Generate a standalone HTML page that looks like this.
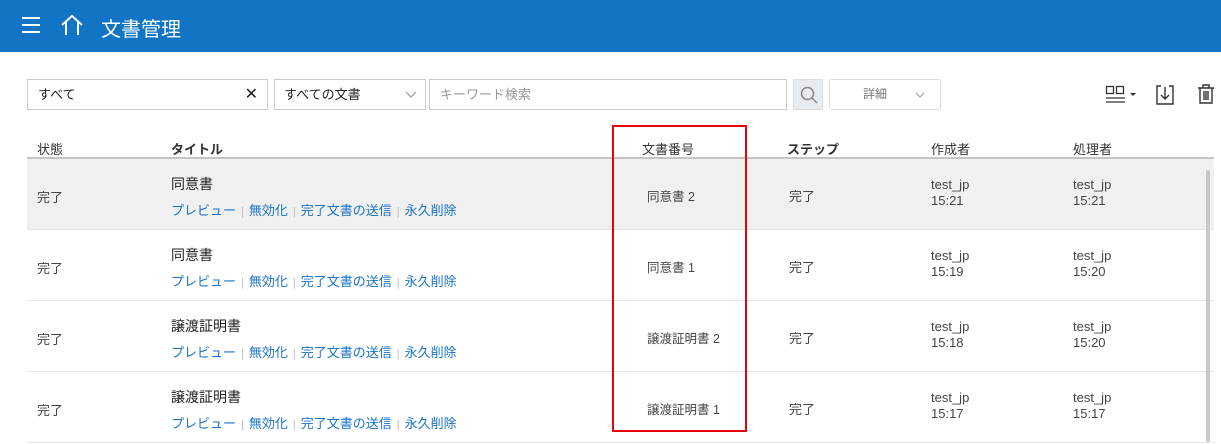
<!DOCTYPE html>
<html><head><meta charset="utf-8"><style>
*{margin:0;padding:0;box-sizing:border-box}
body{width:1221px;height:444px;overflow:hidden;background:#fff;font-family:"Liberation Sans","Noto Sans CJK JP",sans-serif;color:#333;position:relative}
.hd{position:absolute;left:0;top:0;width:1221px;height:52px;background:#1174c4}
.hd .t{position:absolute;left:101px;top:13px;color:#fff;font-size:20px}
.a{position:absolute}
.box{position:absolute;top:79px;height:31px;border:1px solid #ccc;background:#fff;font-size:13px;line-height:29px}
.th{position:absolute;top:139px;font-size:13px;color:#333}
.row{position:absolute;left:27px;width:1187px;height:71px;border-bottom:1px solid #e6e6e6}
.c{position:absolute;font-size:13px;color:#444}
.lk{color:#1a73c8;font-size:13px}
.sep{color:#bbb;margin:0 5px;font-size:11px}
</style></head><body>
<div class="hd">
<div class="a" style="left:22px;top:17px;width:18px;height:2px;background:#fff;box-shadow:0 7px 0 #fff,0 14px 0 #fff"></div>
<svg class="a" style="left:60px;top:14px" width="24" height="22" viewBox="0 0 24 22"><path d="M2 11 L12 2 L22 11 M6 8 V21 M18 8 V21" fill="none" stroke="#fff" stroke-width="2"/></svg>
<div class="t">文書管理</div>
</div>
<div class="box" style="left:27px;width:241px;padding-left:10px;color:#222">すべて<span style="position:absolute;right:9px;top:0;font-size:16px;color:#222">✕</span></div>
<div class="box" style="left:274px;width:152px;padding-left:9px;color:#222">すべての文書<svg class="a" style="right:8px;top:11px" width="12" height="8"><path d="M1 1 L6 6 L11 1" fill="none" stroke="#999" stroke-width="1.2"/></svg></div>
<div class="box" style="left:429px;width:358px;padding-left:10px;color:#999">キーワード検索</div>
<div class="box" style="left:793px;width:30px;background:#e8ebee;border-color:#ddd"><svg class="a" style="left:6px;top:6px" width="18" height="18"><circle cx="7.5" cy="7.5" r="6" fill="none" stroke="#888" stroke-width="1.5"/><path d="M12 12 L17 17" stroke="#888" stroke-width="1.5"/></svg></div>
<div class="box" style="left:829px;width:112px;border-color:#ddd;border-radius:3px;color:#777;font-size:12px;padding-left:33px">詳細<svg class="a" style="right:15px;top:12px" width="10" height="6"><path d="M1 1 L5 5 L9 1" fill="none" stroke="#999"/></svg></div>
<svg class="a" style="left:1104px;top:84px" width="36" height="22"><rect x="2.5" y="2.5" width="7" height="7" fill="none" stroke="#333" stroke-width="1.3"/><rect x="12.5" y="2.5" width="7" height="7" fill="none" stroke="#333" stroke-width="1.3"/><path d="M2 14 H21 M2 18 H21" stroke="#333" stroke-width="1.3"/><path d="M26 9 L32 9 L29 12Z" fill="#333"/></svg>
<svg class="a" style="left:1155px;top:84px" width="20" height="22"><path d="M6 2 H2 V20 H18 V2 H14" fill="none" stroke="#333" stroke-width="1.4"/><path d="M10 3 V15 M6 11 L10 15 L14 11" fill="none" stroke="#333" stroke-width="1.4"/></svg>
<svg class="a" style="left:1196px;top:83px" width="20" height="22"><path d="M2 5 H18 M7 5 V2 H13 V5 M4 5 V20 H16 V5 M8 8 V17 M10 8 V17 M12 8 V17" fill="none" stroke="#333" stroke-width="1.4"/></svg>
<div class="th" style="left:37px">状態</div>
<div class="th" style="left:171px;font-weight:bold">タイトル</div>
<div class="th" style="left:642px">文書番号</div>
<div class="th" style="left:787px;font-weight:bold">ステップ</div>
<div class="th" style="left:931px">作成者</div>
<div class="th" style="left:1073px">処理者</div>
<div class="a" style="left:27px;top:157px;width:1187px;height:2px;background:#c4c4c4"></div>

<div class="row" style="top:159px;background:#f0f0f0">
<div class="c" style="left:10px;top:28px">完了</div>
<div class="c" style="left:144px;top:15px;font-size:14px;color:#222">同意書</div>
<div class="c" style="left:144px;top:41px"><span class="lk">プレビュー</span><span class="sep">|</span><span class="lk">無効化</span><span class="sep">|</span><span class="lk">完了文書の送信</span><span class="sep">|</span><span class="lk">永久削除</span></div>
<div class="c" style="left:620px;top:27px;font-size:12.5px">同意書 2</div>
<div class="c" style="left:762px;top:27px">完了</div>
<div class="c" style="left:904px;top:18px;line-height:16px">test_jp<br>15:21</div>
<div class="c" style="left:1046px;top:18px;line-height:16px">test_jp<br>15:21</div>
</div>
<div class="row" style="top:230px">
<div class="c" style="left:10px;top:28px">完了</div>
<div class="c" style="left:144px;top:15px;font-size:14px;color:#222">同意書</div>
<div class="c" style="left:144px;top:41px"><span class="lk">プレビュー</span><span class="sep">|</span><span class="lk">無効化</span><span class="sep">|</span><span class="lk">完了文書の送信</span><span class="sep">|</span><span class="lk">永久削除</span></div>
<div class="c" style="left:620px;top:27px;font-size:12.5px">同意書 1</div>
<div class="c" style="left:762px;top:27px">完了</div>
<div class="c" style="left:904px;top:18px;line-height:16px">test_jp<br>15:19</div>
<div class="c" style="left:1046px;top:18px;line-height:16px">test_jp<br>15:20</div>
</div>
<div class="row" style="top:301px">
<div class="c" style="left:10px;top:28px">完了</div>
<div class="c" style="left:144px;top:15px;font-size:14px;color:#222">譲渡証明書</div>
<div class="c" style="left:144px;top:41px"><span class="lk">プレビュー</span><span class="sep">|</span><span class="lk">無効化</span><span class="sep">|</span><span class="lk">完了文書の送信</span><span class="sep">|</span><span class="lk">永久削除</span></div>
<div class="c" style="left:620px;top:27px;font-size:12.5px">譲渡証明書 2</div>
<div class="c" style="left:762px;top:27px">完了</div>
<div class="c" style="left:904px;top:18px;line-height:16px">test_jp<br>15:18</div>
<div class="c" style="left:1046px;top:18px;line-height:16px">test_jp<br>15:20</div>
</div>
<div class="row" style="top:372px">
<div class="c" style="left:10px;top:28px">完了</div>
<div class="c" style="left:144px;top:15px;font-size:14px;color:#222">譲渡証明書</div>
<div class="c" style="left:144px;top:41px"><span class="lk">プレビュー</span><span class="sep">|</span><span class="lk">無効化</span><span class="sep">|</span><span class="lk">完了文書の送信</span><span class="sep">|</span><span class="lk">永久削除</span></div>
<div class="c" style="left:620px;top:27px;font-size:12.5px">譲渡証明書 1</div>
<div class="c" style="left:762px;top:27px">完了</div>
<div class="c" style="left:904px;top:18px;line-height:16px">test_jp<br>15:17</div>
<div class="c" style="left:1046px;top:18px;line-height:16px">test_jp<br>15:17</div>
</div>
<div class="a" style="left:1206px;top:170px;width:4px;height:272px;background:#c8c8c8;border-radius:2px"></div>
<div class="a" style="left:612px;top:125px;width:135px;height:307px;border:2px solid #e8000b"></div>
</body></html>
